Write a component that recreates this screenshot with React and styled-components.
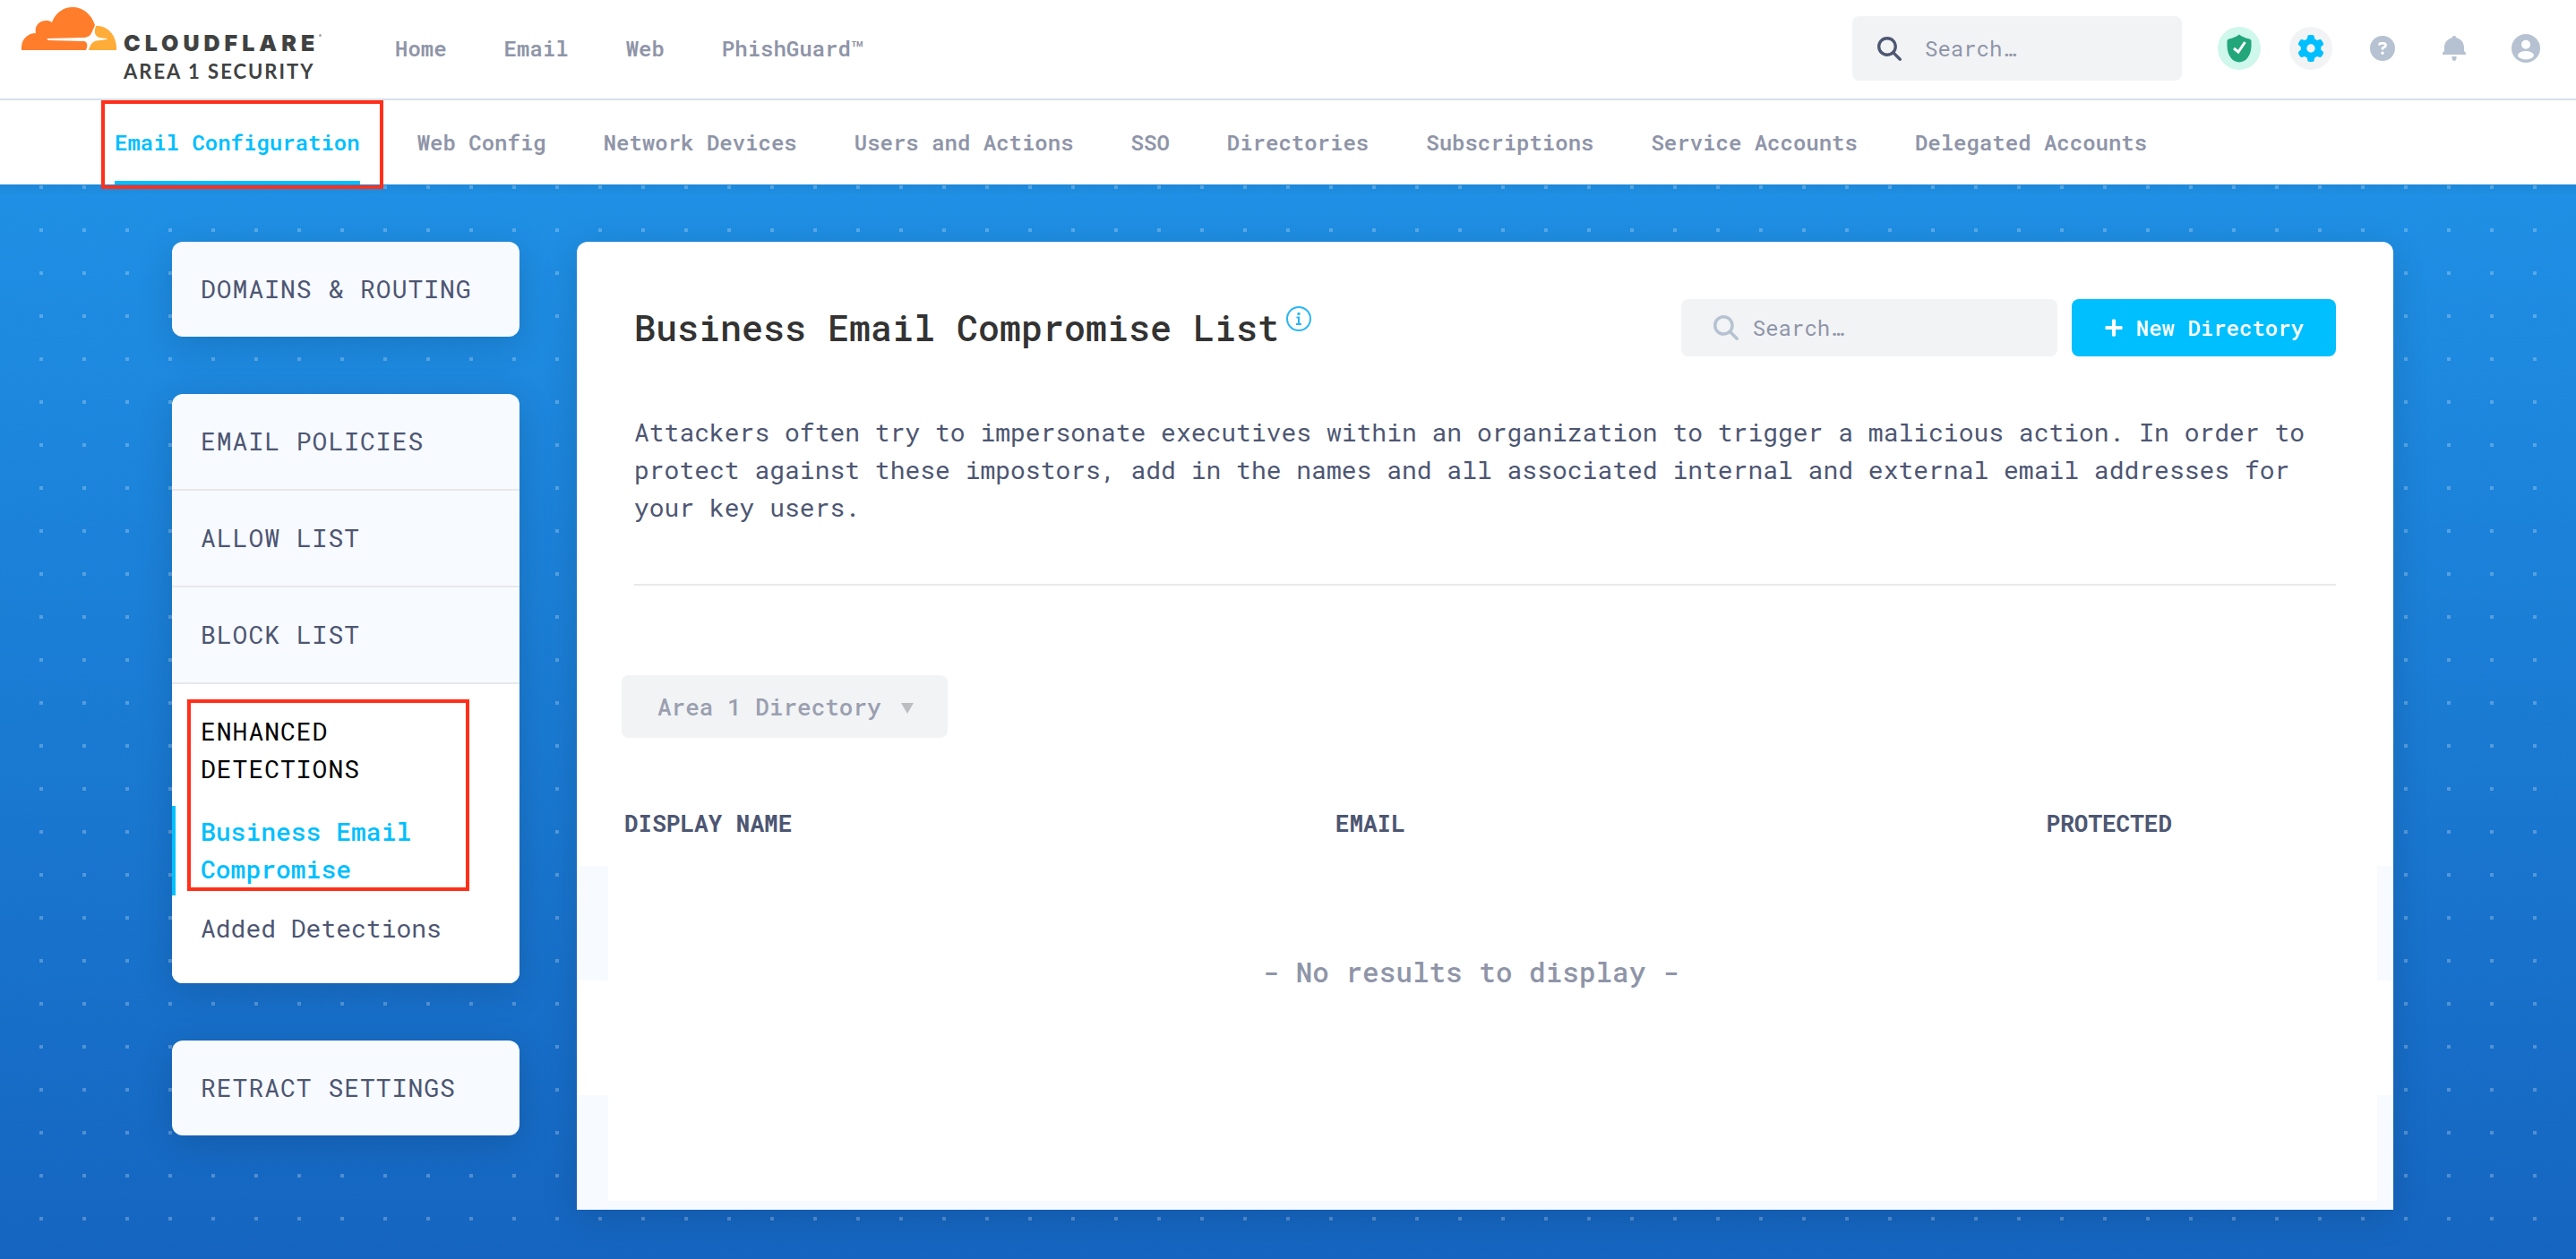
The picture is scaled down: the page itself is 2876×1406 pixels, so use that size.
import React from 'react';
import styled, { createGlobalStyle } from 'styled-components';
import { FaGear, FaCircleQuestion, FaMagnifyingGlass } from 'react-icons/fa6';
import { FaPlus } from 'react-icons/fa';

const color = {
  cyan: '#00bfff',
  ink: '#4d5672',
  muted: '#8f95a8',
  icon: '#b6c2d1',
  field: '#f1f3f5',
  card: '#f7faff',
  line: '#e6e8ec',
  red: '#ff2f1a',
};

const GlobalStyle = createGlobalStyle`
  *, *::before, *::after { box-sizing: border-box; }
  body {
    margin: 0;
    background: #1565c0;
    color: ${color.ink};
    font-family: "Roboto Mono", "DejaVu Sans Mono", monospace;
    font-size: 24px;
  }
  button, input, select { font-family: inherit; }
  a { color: inherit; text-decoration: none; }
`;

const TopBar = styled.header`
  display: flex;
  align-items: center;
  height: 112px;
  padding: 0 32px 2px 24px;
  background: #fff;
  border-bottom: 2px solid #d5e0ea;
`;

const Brand = styled.a`
  display: flex;
  align-items: flex-start;
  gap: 8px;
  width: 417px;
  height: 92px;
  color: #404242;
`;

const CloudMark = styled.svg`
  width: 106px;
  height: 48px;
  flex: none;
`;

const BrandText = styled.span`
  display: flex;
  flex-direction: column;
  gap: 4px;
  padding-top: 26px;
`;

const BrandName = styled.span`
  display: flex;
  font: 900 25px/28px Inter, sans-serif;
  letter-spacing: 5px;
  &::after {
    content: "";
    width: 3px;
    height: 3px;
    margin-top: 4px;
    border-radius: 50%;
    background: #a5a6a6;
  }
`;

const BrandProduct = styled.span`
  font: 700 22px/28px Lato, sans-serif;
  letter-spacing: 2px;
`;

const TopNav = styled.nav`
  display: flex;
  gap: 64px;
  color: ${color.muted};
  line-height: 32px;
  font-weight: 600;
`;

const Tools = styled.div`
  display: flex;
  align-items: center;
  gap: 32px;
  margin-left: auto;
`;

const SearchBox = styled.label`
  display: flex;
  align-items: center;
  gap: ${(p) => (p.$large ? 26 : 16)}px;
  width: ${(p) => (p.$large ? 368 : 420)}px;
  height: ${(p) => (p.$large ? 72 : 64)}px;
  padding: 0 ${(p) => (p.$large ? 28 : 36)}px;
  margin-right: ${(p) => (p.$large ? 8 : 0)}px;
  border-radius: 8px;
  background: ${color.field};
  color: ${(p) => (p.$large ? color.ink : color.icon)};
  svg { flex: none; }
`;

const SearchInput = styled.input`
  flex: 1;
  min-width: 0;
  padding: 0;
  border: 0;
  outline: 0;
  background: transparent;
  color: ${color.ink};
  font-size: 24px;
  line-height: 32px;
  &::placeholder { color: ${color.muted}; opacity: 1; }
`;

const IconButton = styled.button`
  display: flex;
  align-items: center;
  justify-content: center;
  width: 48px;
  height: 48px;
  padding: 0;
  border: 0;
  border-radius: 50%;
  background: ${(p) => p.$bg || 'transparent'};
  color: ${(p) => p.$fg || color.icon};
`;

const SubBar = styled.nav`
  display: flex;
  gap: 64px;
  height: 94px;
  padding: 0 128px;
  background: #fff;
`;

const Tab = styled.a`
  position: relative;
  display: flex;
  align-items: center;
  border-top: 4px solid transparent;
  border-bottom: 4px solid ${(p) => (p.$active ? color.cyan : 'transparent')};
  color: ${(p) => (p.$active ? color.cyan : color.muted)};
  font-weight: 600;
  white-space: nowrap;
`;

const TabHighlight = styled.span`
  position: absolute;
  z-index: 1;
  inset: -4px -26px -9px -15px;
  border: 4px solid ${color.red};
  pointer-events: none;
`;

const Body = styled.main`
  display: flex;
  align-items: flex-start;
  gap: 64px;
  min-height: calc(100vh - 206px);
  padding: 64px 204px 48px 192px;
  background:
    linear-gradient(rgba(0, 0, 0, 0.06), transparent) 0 0 / 100% 12px no-repeat,
    conic-gradient(from 90deg at 44px 44px, rgba(255, 255, 255, 0.25) 90deg, transparent 0) 0 5px / 48px 48px,
    linear-gradient(#1f90e5, #1565c0);
`;

const Sidebar = styled.aside`
  display: flex;
  flex-direction: column;
  flex: none;
  gap: 64px;
  width: 388px;
`;

const Card = styled.div`
  border-radius: 12px;
  background: ${color.card};
  box-shadow: 0 8px 40px rgba(0, 0, 0, 0.14);
  font-size: 28px;
  line-height: 42px;
`;

const CardLink = styled.a`
  display: block;
  padding: 32px;
  letter-spacing: 1px;
  & + & { border-top: 2px solid ${color.line}; }
`;

const OpenSection = styled.section`
  position: relative;
  padding: 32px 0;
  border-top: 2px solid ${color.line};
  border-radius: 0 0 12px 12px;
  background: #fff;
`;

const OpenTitle = styled.h2`
  margin: 0 0 20px;
  padding: 0 32px;
  color: #000;
  font-size: 28px;
  font-weight: 400;
  letter-spacing: 1px;
`;

const SubList = styled.div`
  display: flex;
  flex-direction: column;
  gap: 8px;
`;

const SubLink = styled.a`
  padding: 8px 60px 8px 28px;
  border-left: 4px solid ${(p) => (p.$active ? color.cyan : 'transparent')};
  color: ${(p) => (p.$active ? color.cyan : color.ink)};
  font-weight: ${(p) => (p.$active ? 500 : 400)};
`;

const SectionHighlight = styled.span`
  position: absolute;
  inset: 17px 56px 103px 17px;
  border: 4px solid ${color.red};
  pointer-events: none;
`;

const Panel = styled.section`
  flex: 1;
  min-width: 0;
  border-radius: 12px 12px 0 0;
  background: #fff;
  box-shadow: 0 8px 40px rgba(0, 0, 0, 0.14);
`;

const Intro = styled.div`
  margin: 0 64px;
  padding: 64px 0;
  border-bottom: 2px solid ${color.line};
`;

const TitleRow = styled.div`
  display: flex;
  align-items: center;
  gap: 16px;
`;

const Title = styled.div`
  display: flex;
  align-items: flex-start;
  gap: 8px;
  margin-right: auto;
  color: #29b6f6;
`;

const Heading = styled.h1`
  margin: 0;
  color: #333;
  font-size: 40px;
  font-weight: 500;
  line-height: 48px;
`;

const PrimaryButton = styled.button`
  display: flex;
  align-items: center;
  gap: 14px;
  height: 64px;
  padding: 0 36px;
  border: 0;
  border-radius: 8px;
  background: ${color.cyan};
  color: #fff;
  font-size: 24px;
  font-weight: 500;
  white-space: nowrap;
`;

const Description = styled.p`
  margin: 64px 0 0;
  font-size: 28px;
  line-height: 42px;
`;

const DirectoryPicker = styled.div`
  position: relative;
  width: 364px;
  margin: 100px 0 47px 50px;
`;

const DirectorySelect = styled.select`
  appearance: none;
  width: 100%;
  height: 70px;
  padding: 0 40px;
  border: 0;
  border-radius: 8px;
  background: ${color.field};
  color: #9a9fb0;
  font-size: 26px;
  font-weight: 500;
`;

const Caret = styled.span`
  position: absolute;
  top: 31px;
  right: 38px;
  border: 7px solid transparent;
  border-top: 12px solid #bbbdc0;
  border-bottom: 0;
  pointer-events: none;
`;

const TableZone = styled.div`
  padding: 0 18px 10px 35px;
  background: repeating-linear-gradient(${color.card} 0 128px, #fff 128px 256px) 0 96px / 100% 384px no-repeat;
`;

const TableSheet = styled.div`
  padding: 0 67px 0 18px;
  background: #fff;
`;

const Table = styled.table`
  width: 100%;
  table-layout: fixed;
  border-collapse: collapse;
`;

const HeadCell = styled.th`
  width: ${(p) => p.$width};
  height: 96px;
  padding: 0;
  font-size: 26px;
  font-weight: 700;
  text-align: left;
`;

const EmptyCell = styled.td`
  padding: 100px 0 238px;
  color: ${color.muted};
  font-size: 31px;
  font-weight: 500;
  line-height: 36px;
  text-align: center;
`;

const tabs = [
  'Email Configuration',
  'Web Config',
  'Network Devices',
  'Users and Actions',
  'SSO',
  'Directories',
  'Subscriptions',
  'Service Accounts',
  'Delegated Accounts',
];

function Cloud() {
  return (
    <CloudMark viewBox="0 0 106 48" aria-hidden="true">
      <path
        fill="#ff7d2b"
        d="M0 48C-1 37 6 29 16 29C14 20 21 14 29 15C31 15 33 16 34 17C38 6 47 0 57 0C69 0 78 8 82 20C82 21 80 24 79 27C77 32 74 34 69 34L29 35C28 36 29 37 30 37L69 38C73 38 74 42 73 45L72 48Z"
      />
      <path
        fill="#ffac38"
        d="M83 21C97 20 107 33 106 48H75C77 40 81 37 88 37L95 36C96 36 96 35 95 35L87 34C81 32 81 27 83 21Z"
      />
    </CloudMark>
  );
}

function ShieldCheck() {
  return (
    <svg width="28" height="32" viewBox="0 0 28 32" aria-hidden="true">
      <path
        fill="#22a67a"
        d="M14 0.500C17 3 21 4.500 25.500 5.500Q27.500 6 27.500 8V14C27 24 22 31 14 31.500C6 31 1 24 0.500 14V8Q0.500 6 2.500 5.500C7 4.500 11 3 14 0.500Z"
      />
      <path fill="none" stroke="#fff" strokeWidth="3" d="M8 16L13 20L20.500 9" />
    </svg>
  );
}

function Bell() {
  return (
    <svg width="26" height="28" viewBox="0 0 26 28" fill="currentColor" aria-hidden="true">
      <path d="M0 21V19L2 17V13C2 7.500 5.500 3.500 10.500 2.300Q11 0 13 0Q15 0 15.500 2.300C20.500 3.500 24 7.500 24 13V17L26 19V21Z" />
      <path d="M10.500 23H15.500V25Q15 28 13 28Q11 28 10.500 25Z" />
    </svg>
  );
}

function Account() {
  return (
    <svg width="32" height="32" viewBox="0 0 32 32" aria-hidden="true">
      <circle cx="16" cy="16" r="16" fill="currentColor" />
      <circle cx="16" cy="11.700" r="5" fill="#fff" />
      <ellipse cx="16" cy="23.700" rx="9" ry="4.700" fill="#fff" />
    </svg>
  );
}

function Info() {
  return (
    <svg width="28" height="28" viewBox="0 0 28 28" aria-hidden="true">
      <circle cx="14" cy="14" r="13" fill="none" stroke="currentColor" strokeWidth="2" />
      <circle cx="14" cy="8.500" r="1.700" fill="currentColor" />
      <path fill="none" stroke="currentColor" strokeWidth="2" d="M11.500 12.500H14V20M11 20H17" />
    </svg>
  );
}

export default function App() {
  return (
    <>
      <GlobalStyle />
      <TopBar>
        <Brand href="#">
          <Cloud />
          <BrandText>
            <BrandName>CLOUDFLARE</BrandName>
            <BrandProduct>AREA 1 SECURITY</BrandProduct>
          </BrandText>
        </Brand>
        <TopNav>
          {['Home', 'Email', 'Web', 'PhishGuard™'].map((name) => (
            <a key={name} href="#">{name}</a>
          ))}
        </TopNav>
        <Tools>
          <SearchBox $large>
            <FaMagnifyingGlass size={27} />
            <SearchInput type="text" placeholder="Search…" aria-label="Search" />
          </SearchBox>
          <IconButton $bg="#cff7ec" aria-label="Protection status"><ShieldCheck /></IconButton>
          <IconButton $bg={color.field} $fg={color.cyan} aria-label="Settings"><FaGear size={30} /></IconButton>
          <IconButton aria-label="Help"><FaCircleQuestion size={28} /></IconButton>
          <IconButton aria-label="Notifications"><Bell /></IconButton>
          <IconButton aria-label="Account"><Account /></IconButton>
        </Tools>
      </TopBar>
      <SubBar>
        {tabs.map((name, i) => (
          <Tab key={name} href="#" $active={i === 0}>
            {name}
            {i === 0 && <TabHighlight />}
          </Tab>
        ))}
      </SubBar>
      <Body>
        <Sidebar>
          <Card>
            <CardLink href="#">DOMAINS &amp; ROUTING</CardLink>
          </Card>
          <Card>
            <CardLink href="#">EMAIL POLICIES</CardLink>
            <CardLink href="#">ALLOW LIST</CardLink>
            <CardLink href="#">BLOCK LIST</CardLink>
            <OpenSection>
              <OpenTitle>ENHANCED DETECTIONS</OpenTitle>
              <SubList>
                <SubLink href="#" $active>Business Email Compromise</SubLink>
                <SubLink href="#">Added Detections</SubLink>
              </SubList>
              <SectionHighlight />
            </OpenSection>
          </Card>
          <Card>
            <CardLink href="#">RETRACT SETTINGS</CardLink>
          </Card>
        </Sidebar>
        <Panel>
          <Intro>
            <TitleRow>
              <Title>
                <Heading>Business Email Compromise List</Heading>
                <Info />
              </Title>
              <SearchBox>
                <FaMagnifyingGlass size={28} />
                <SearchInput type="text" placeholder="Search…" aria-label="Search directories" />
              </SearchBox>
              <PrimaryButton type="button">
                <FaPlus size={22} />
                New Directory
              </PrimaryButton>
            </TitleRow>
            <Description>
              Attackers often try to impersonate executives within an organization to trigger a malicious
              action. In order to protect against these impostors, add in the names and all associated
              internal and external email addresses for your key users.
            </Description>
          </Intro>
          <DirectoryPicker>
            <DirectorySelect aria-label="Directory">
              <option>Area 1 Directory</option>
            </DirectorySelect>
            <Caret />
          </DirectoryPicker>
          <TableZone>
            <TableSheet>
              <Table>
                <thead>
                  <tr>
                    <HeadCell scope="col" $width="42%">DISPLAY NAME</HeadCell>
                    <HeadCell scope="col" $width="42%">EMAIL</HeadCell>
                    <HeadCell scope="col" $width="16%">PROTECTED</HeadCell>
                  </tr>
                </thead>
                <tbody>
                  <tr>
                    <EmptyCell colSpan={3}>- No results to display -</EmptyCell>
                  </tr>
                </tbody>
              </Table>
            </TableSheet>
          </TableZone>
        </Panel>
      </Body>
    </>
  );
}
